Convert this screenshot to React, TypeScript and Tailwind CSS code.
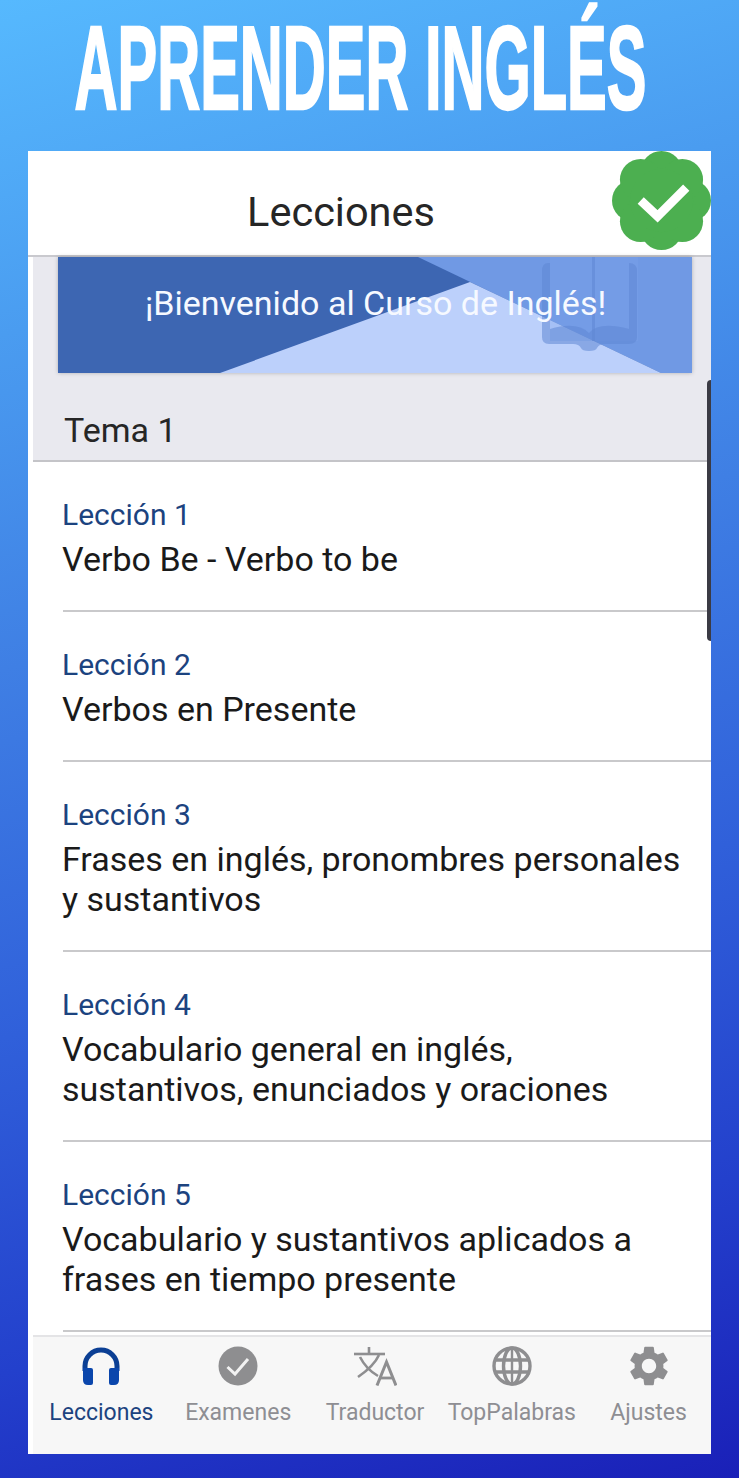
import { MdSettings } from "react-icons/md";

const lessons = [
  { id: 1, label: "Lección 1", lines: ["Verbo Be - Verbo to be"] },
  { id: 2, label: "Lección 2", lines: ["Verbos en Presente"] },
  { id: 3, label: "Lección 3", lines: ["Frases en inglés, pronombres personales", "y sustantivos"] },
  { id: 4, label: "Lección 4", lines: ["Vocabulario general en inglés,", "sustantivos, enunciados y oraciones"] },
  { id: 5, label: "Lección 5", lines: ["Vocabulario y sustantivos aplicados a", "frases en tiempo presente"] },
];

const HeadsetIcon = () => (
  <svg viewBox="0 0 40 40" className="h-10 w-10">
    <path d="M4 25 V20 a16 16 0 0 1 32 0 V25" fill="none" stroke="#0b3f94" strokeWidth="5" />
    <path d="M2 22 h8 q2 0 2 2 v13 q0 2 -2 2 h-3 q-5 0 -5 -5 z" fill="#0a46ac" />
    <path d="M38 22 h-8 q-2 0 -2 2 v13 q0 2 2 2 h3 q5 0 5 -5 z" fill="#0a46ac" />
  </svg>
);

const CheckIcon = () => (
  <svg viewBox="0 0 40 40" className="h-10 w-10">
    <circle cx="20" cy="20" r="19.5" fill="#8e8e90" />
    <path d="M9.5 21 L17 28 L30 13" fill="none" stroke="#f2f2f2" strokeWidth="3" />
  </svg>
);

const TranslateIcon = () => (
  <svg viewBox="0 0 44 40" className="h-10 w-11" fill="none" stroke="#8e8e90" strokeWidth="2.6">
    <path d="M1 8 H32" />
    <path d="M16 1 V8" />
    <path d="M7 11 Q13 23 25 30" />
    <path d="M26 9 Q21 20 5 31" />
    <path d="M24 39.5 L33.5 16 L43 39.5" strokeWidth="3" />
    <path d="M27 32 H40" strokeWidth="2.8" />
  </svg>
);

const GlobeIcon = () => (
  <svg viewBox="0 0 40 40" className="h-10 w-10" fill="none" stroke="#8e8e90" strokeWidth="3.4">
    <circle cx="20" cy="20" r="18" />
    <ellipse cx="20" cy="20" rx="8.5" ry="18" />
    <path d="M20 2 V38" strokeWidth="2.4" />
    <path d="M4 14 H36 M4 26 H36" />
  </svg>
);

const SettingsIcon = () => <MdSettings size={48} className="-my-1 text-[#8e8e90]" />;

const tabs = [
  { label: "Lecciones", Icon: HeadsetIcon, active: true },
  { label: "Examenes", Icon: CheckIcon, active: false },
  { label: "Traductor", Icon: TranslateIcon, active: false },
  { label: "TopPalabras", Icon: GlobeIcon, active: false },
  { label: "Ajustes", Icon: SettingsIcon, active: false },
];

const VerifiedBadge = () => (
  <svg viewBox="0 0 100 100" className="absolute right-0 top-0 h-[99px] w-[99px]">
    <g fill="#4caf50">
      <circle cx="50" cy="21" r="21" />
      <circle cx="50" cy="79" r="21" />
      <circle cx="21" cy="50" r="21" />
      <circle cx="79" cy="50" r="21" />
      <circle cx="29" cy="29" r="21" />
      <circle cx="71" cy="29" r="21" />
      <circle cx="29" cy="71" r="21" />
      <circle cx="71" cy="71" r="21" />
      <circle cx="50" cy="50" r="32" />
    </g>
    <path d="M29 50 L46 66 L75 37" fill="none" stroke="#fff" strokeWidth="9" />
  </svg>
);

const Banner = () => (
  <div className="relative h-[116px] w-[634px] shadow-[0_0_4px_rgba(0,0,0,0.25)]">
    <svg viewBox="0 0 634 116" className="block h-full w-full">
      <rect width="634" height="116" fill="#3d66b2" />
      <polygon points="360,0 634,0 634,116 603,116" fill="#7099e4" />
      <polygon points="162,116 412,25 603,116" fill="#bcd0fb" />
      <g>
        <path d="M492 0 h88 v84 h-88 z" fill="#7ca3ea" fillOpacity="0.35" />
        <path
          d="M492 6 h-2 q-6 0 -6 8 v66 q0 7 7 7 h24 q6 0 8 4 q1 3 8 3 t8 -3 q2 -4 8 -4 h24 q8 0 8 -7 v-66 q0 -8 -8 -8 v66 q-30 -8 -40 4 q-12 -12 -39 -4 z"
          fill="#5f86d3"
          fillOpacity="0.55"
        />
        <rect x="534" y="0" width="3" height="84" fill="#5f86d3" fillOpacity="0.55" />
      </g>
    </svg>
    <span className="absolute left-[87px] top-[26px] whitespace-nowrap text-[34px] leading-[40px] text-[#f6f9ff]">
      ¡Bienvenido al Curso de Inglés!
    </span>
  </div>
);

export default function App() {
  return (
    <div
      className="flex h-[1478px] w-[739px] flex-col overflow-hidden bg-[linear-gradient(165deg,#56b9fe_0%,#4a9cf0_20%,#3f7fe4_40%,#3060da_62%,#2340cc_82%,#1a20b8_100%)]"
      style={{ fontFamily: "Roboto, 'Noto Sans', sans-serif" }}
    >
      <div className="flex h-[151px] shrink-0 justify-center pr-[18px]">
        <h1
          className="mt-[1px] origin-top scale-y-[2] whitespace-nowrap text-[59.5px] font-bold leading-[67px] text-white [-webkit-text-stroke:1.2px_white]"
          style={{ fontFamily: "'Liberation Sans Narrow', 'Liberation Sans', sans-serif" }}
        >
          APRENDER INGLÉS
        </h1>
      </div>

      <div className="relative ml-[28px] flex h-[1303px] w-[683px] flex-col bg-white">
        <header className="flex h-[106px] shrink-0 items-center justify-center border-b-2 border-[#c9c9ce] pr-[57px] pt-[18px]">
          <span className="text-[41.5px] leading-none text-[#262626]">Lecciones</span>
        </header>
        <VerifiedBadge />

        <div className="ml-[5px] flex min-h-0 flex-1 flex-col">
          <div className="bg-[#e9e9ef]">
            <div className="pl-[25px]">
              <Banner />
            </div>
            <div className="flex h-[89px] items-end border-b-2 border-[#c4c4c8] pb-[8px] pl-[31px]">
              <span className="text-[34px] leading-[44px] text-[#262626]">Tema 1</span>
            </div>
          </div>

          <ul className="min-h-0 flex-1 overflow-hidden">
            {lessons.map((lesson) => (
              <li key={lesson.id} className="pl-[29px] pt-[35px]">
                <p className="text-[30px] leading-[36px] text-[#1c437f]">{lesson.label}</p>
                <div className="mt-[6px] text-[34px] leading-[40px] text-[#1a1a1a]">
                  {lesson.lines.map((line) => (
                    <p key={line} className="whitespace-nowrap">
                      {line}
                    </p>
                  ))}
                </div>
                <div className="ml-[1px] mt-[31px] h-[2px] bg-[#c9c9cb]" />
              </li>
            ))}
          </ul>

          <nav className="flex h-[119px] shrink-0 border-t-2 border-[#e4e4e6] bg-[#f7f7f7] pt-[9px]">
            {tabs.map(({ label, Icon, active }) => (
              <div key={label} className="flex w-[136.8px] shrink-0 flex-col items-center">
                <Icon />
                <span className={`mt-[12px] whitespace-nowrap text-[23px] leading-[30px] ${active ? "text-[#1c437f]" : "text-[#8e8e93]"}`}>
                  {label}
                </span>
              </div>
            ))}
          </nav>
        </div>

        <div className="absolute right-0 top-[229px] h-[261px] w-[4px] rounded-l-md bg-[#3b3b44]" />
      </div>
    </div>
  );
}
